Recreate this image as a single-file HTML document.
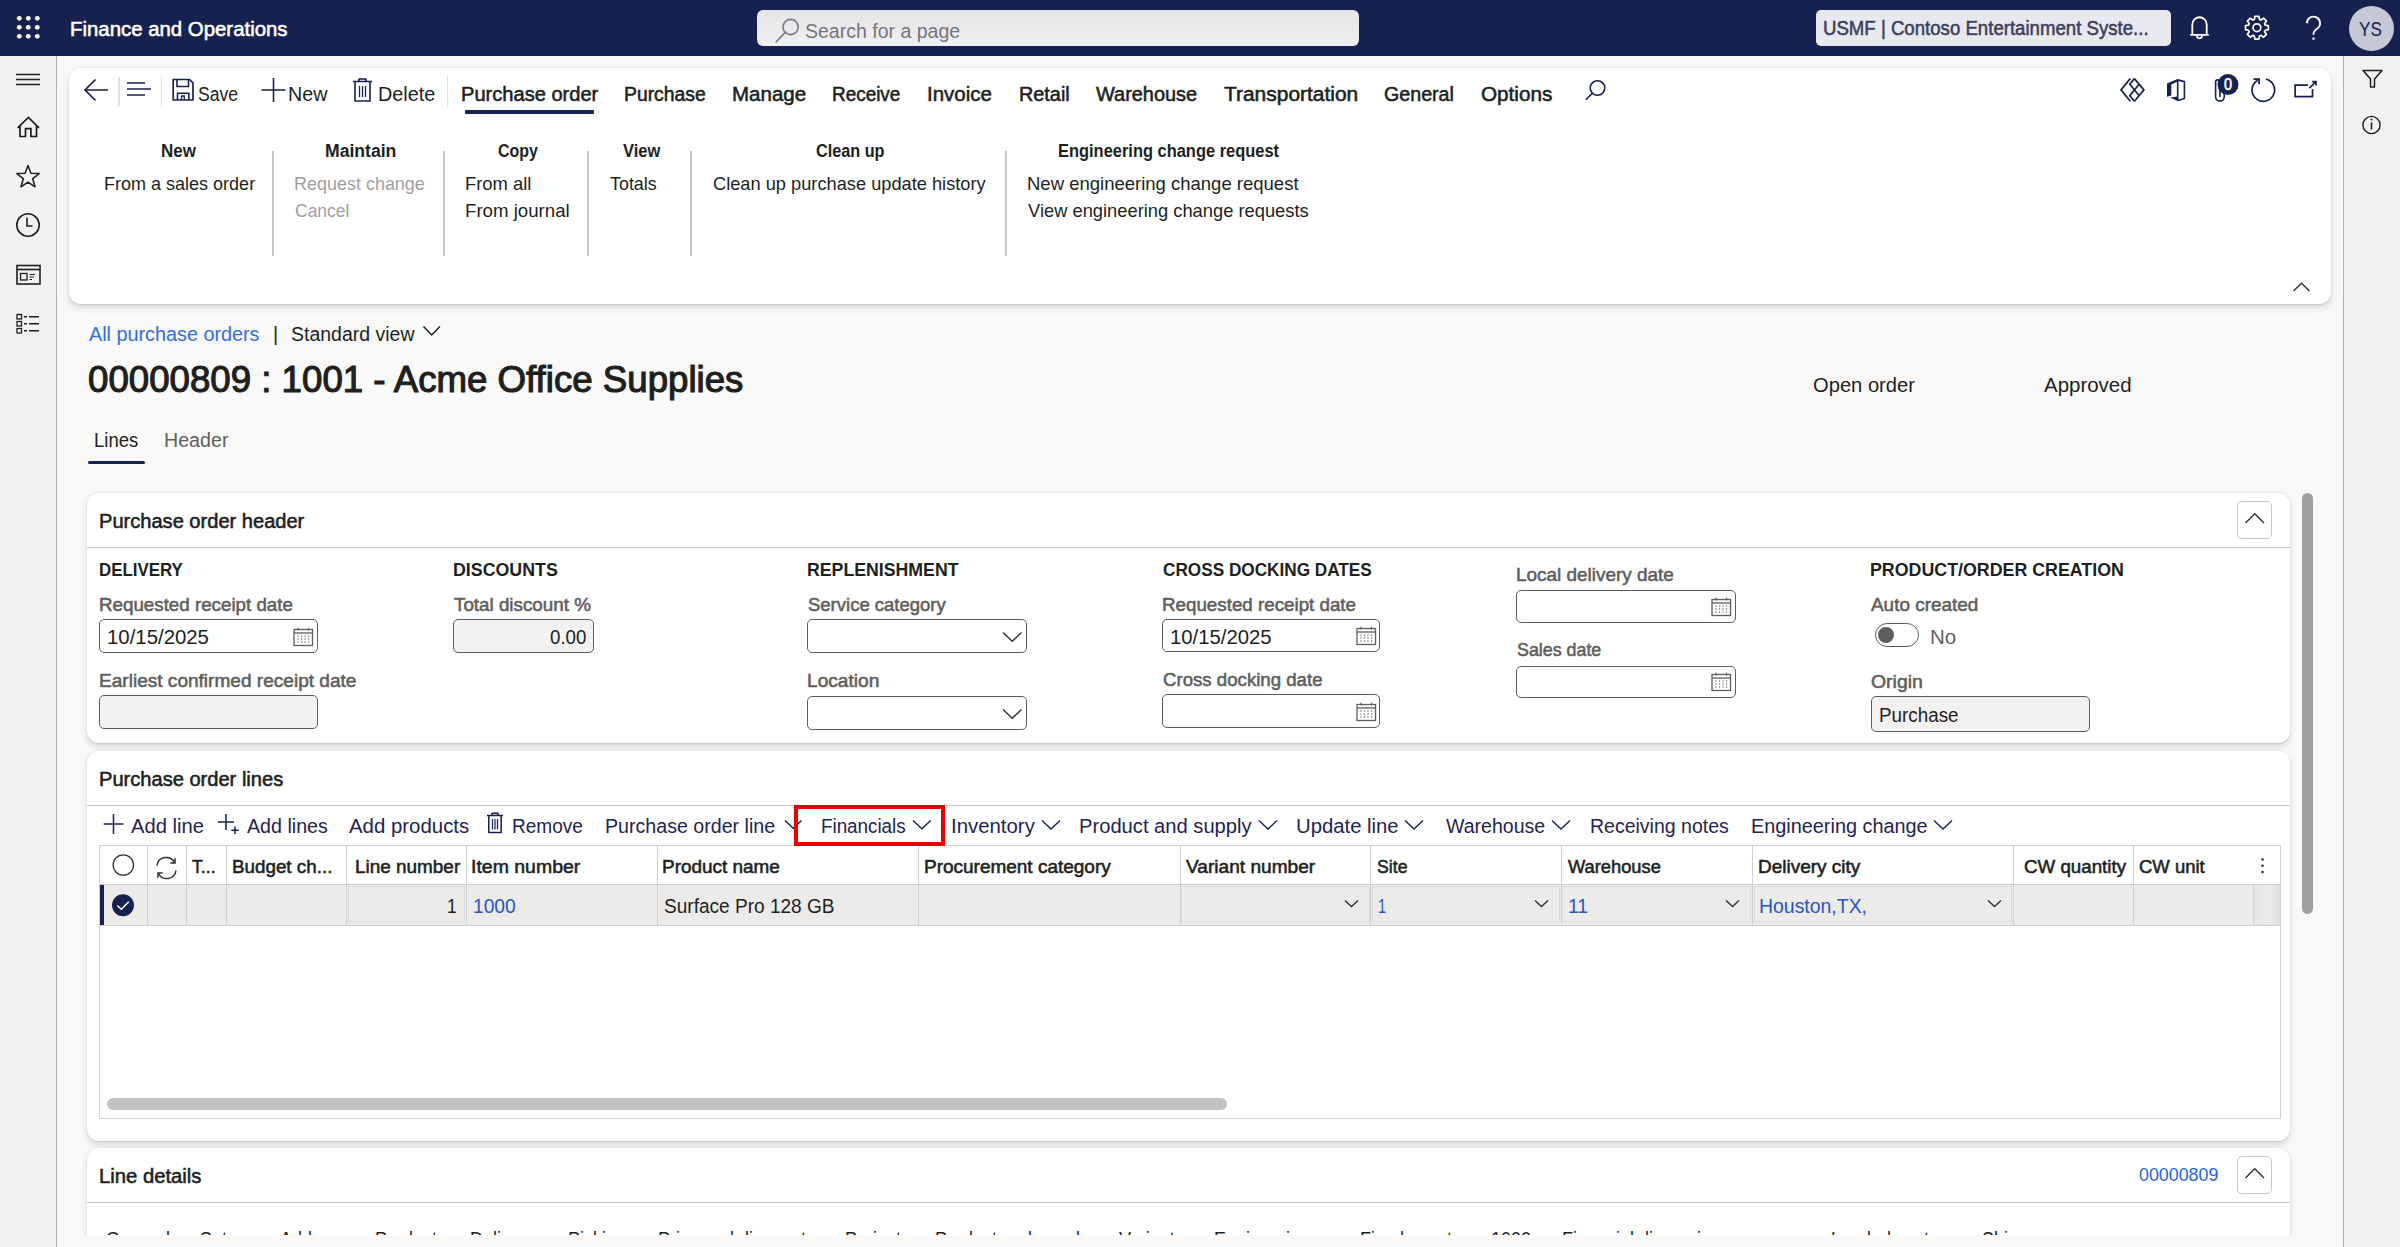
<!DOCTYPE html>
<html><head><meta charset="utf-8"><title>Finance and Operations</title>
<style>
html,body{margin:0;padding:0;width:2400px;height:1247px;overflow:hidden;background:#faf9f8}
body{position:relative;font-family:"Liberation Sans",sans-serif}
span{position:absolute;white-space:pre;line-height:1;transform-origin:0 0}
svg{overflow:visible}
</style></head><body>
<div style="position:absolute;left:0px;top:0px;width:2400px;height:1247px;background:#faf9f8"></div>
<div style="position:absolute;left:0px;top:56px;width:56px;height:1191px;background:#f3f2f1"></div>
<div style="position:absolute;left:56px;top:56px;width:1px;height:1191px;background:#b3b0ad"></div>
<div style="position:absolute;left:2343px;top:56px;width:57px;height:1191px;background:#f3f2f1"></div>
<div style="position:absolute;left:2343px;top:56px;width:1px;height:1191px;background:#b3b0ad"></div>
<div style="position:absolute;left:0px;top:0px;width:2400px;height:56px;background:#172150"></div>
<svg style="position:absolute;left:0px;top:0px" width="56" height="56" viewBox="0 0 56 56" fill="none"><circle cx="19.3" cy="18.3" r="2.4" fill="#fff"/><circle cx="19.3" cy="27.3" r="2.4" fill="#fff"/><circle cx="19.3" cy="36.3" r="2.4" fill="#fff"/><circle cx="28.3" cy="18.3" r="2.4" fill="#fff"/><circle cx="28.3" cy="27.3" r="2.4" fill="#fff"/><circle cx="28.3" cy="36.3" r="2.4" fill="#fff"/><circle cx="37.3" cy="18.3" r="2.4" fill="#fff"/><circle cx="37.3" cy="27.3" r="2.4" fill="#fff"/><circle cx="37.3" cy="36.3" r="2.4" fill="#fff"/></svg>
<div style="position:absolute;left:757px;top:10px;width:602px;height:36px;background:linear-gradient(#e4e4e6,#f0f0f2);border-radius:6px"></div>
<svg style="position:absolute;left:770px;top:14px" width="30" height="32" viewBox="0 0 30 32" fill="none"><circle cx="20.6" cy="13" r="7.6" stroke="#7b7b84" stroke-width="1.6"/><path d="M15.2 18.4 L5.6 28.5" stroke="#7b7b84" stroke-width="1.6"/></svg>
<div style="position:absolute;left:1816px;top:10px;width:355px;height:36px;background:#e8e9ee;border-radius:5px"></div>
<svg style="position:absolute;left:0;top:0" width="2400" height="1247" viewBox="0 0 2400 1247" fill="none"><path d="M2192.3 34.9 V24.4 A7.2 7.2 0 0 1 2206.7 24.4 V34.9 M2190.2 34.9 H2208.8 M2197 35.8 A2.5 2.5 0 0 0 2202 35.8" stroke="#fff" stroke-width="1.8"/><path d="M2254.36 19.38 L2254.89 16.28 L2258.91 16.28 L2259.44 19.38 L2260.98 20.02 L2263.55 18.20 L2266.40 21.05 L2264.58 23.62 L2265.22 25.16 L2268.32 25.69 L2268.32 29.71 L2265.22 30.24 L2264.58 31.78 L2266.40 34.35 L2263.55 37.20 L2260.98 35.38 L2259.44 36.02 L2258.91 39.12 L2254.89 39.12 L2254.36 36.02 L2252.82 35.38 L2250.25 37.20 L2247.40 34.35 L2249.22 31.78 L2248.58 30.24 L2245.48 29.71 L2245.48 25.69 L2248.58 25.16 L2249.22 23.62 L2247.40 21.05 L2250.25 18.20 L2252.82 20.02Z" stroke="#fff" stroke-width="1.7" stroke-linejoin="round"/><circle cx="2256.9" cy="27.7" r="3.9" stroke="#fff" stroke-width="1.7"/><path d="M2306.9 23.2 A6.6 6.6 0 1 1 2317.3 28.6 C2314.6 30.4 2313.4 31.8 2313.4 34.8" stroke="#fff" stroke-width="1.8"/><rect x="2312.4" y="37.6" width="2.1" height="2.1" fill="#fff"/></svg>
<div style="position:absolute;left:2348.75px;top:5.5px;width:45px;height:45px;border-radius:50%;background:#c5c8d6"></div>
<svg style="position:absolute;left:0px;top:56px" width="56" height="300" viewBox="0 0 56 300" fill="none"><path d="M16 18.5 H40 M16 23.5 H40 M16 28.5 H40" stroke="#201f1e" stroke-width="1.3"/><path d="M17.6 71.9 L28.4 61.4 L39 71.9 M20 70 V80.5 H25.5 V72.7 H30.9 V80.5 H36.5 V70" stroke="#201f1e" stroke-width="1.7" stroke-linejoin="miter"/><path d="M28 109.5 L30.9 117.3 L39.2 117.6 L32.7 122.7 L35 130.8 L28 126.2 L21 130.8 L23.3 122.7 L16.8 117.6 L25.1 117.3 Z" stroke="#201f1e" stroke-width="1.5" stroke-linejoin="round"/><circle cx="28" cy="169" r="11.2" stroke="#201f1e" stroke-width="1.6"/><path d="M27 161.5 V170 H32.5" stroke="#201f1e" stroke-width="1.6"/><rect x="17" y="209.5" width="23" height="18.5" stroke="#201f1e" stroke-width="1.6"/><path d="M17 213.5 H40" stroke="#201f1e" stroke-width="1.6"/><rect x="20.5" y="217.5" width="6.5" height="6.5" stroke="#201f1e" stroke-width="1.3"/><path d="M29.5 218.5 H35 M29.5 221 H34 M29.5 223.5 H32" stroke="#201f1e" stroke-width="1.2"/><rect x="17" y="258.5" width="4.5" height="4.5" stroke="#201f1e" stroke-width="1.3"/><rect x="17" y="265.5" width="4.5" height="4.5" stroke="#201f1e" stroke-width="1.3"/><rect x="17" y="272.5" width="4.5" height="4.5" stroke="#201f1e" stroke-width="1.3"/><path d="M24 260.7 H27 M29 260.7 H39 M24 267.7 H27 M29 267.7 H39 M24 274.7 H27 M29 274.7 H39" stroke="#201f1e" stroke-width="1.5"/></svg>
<svg style="position:absolute;left:2356px;top:64px" width="32" height="80" viewBox="0 0 32 80" fill="none"><path d="M7 6.5 H26 L18.5 15 V23 H14.5 V15 Z" stroke="#201f1e" stroke-width="1.5" stroke-linejoin="round"/><circle cx="15.5" cy="61" r="8.6" stroke="#201f1e" stroke-width="1.4"/><path d="M15.5 58.5 V65.5" stroke="#201f1e" stroke-width="1.6"/><circle cx="15.5" cy="55.6" r="1" fill="#201f1e"/></svg>
<div style="position:absolute;left:69px;top:68px;width:2262px;height:236px;background:#fff;border-radius:12px;box-shadow:0 3.2px 7.2px rgba(0,0,0,.13),0 0.6px 1.8px rgba(0,0,0,.11)"></div>
<svg style="position:absolute;left:80px;top:72px" width="34" height="36" viewBox="0 0 34 36" fill="none"><path d="M5 18 H28 M15.5 7.5 L5 18 L15.5 28.5" stroke="#172150" stroke-width="1.7" stroke-linejoin="miter"/></svg>
<div style="position:absolute;left:118px;top:77px;width:2px;height:29px;background:#e1dfdd"></div>
<svg style="position:absolute;left:124px;top:76px" width="30" height="24" viewBox="0 0 30 24" fill="none"><path d="M3 7 H21 M3 13 H27 M3 19 H21" stroke="#172150" stroke-width="1.7"/></svg>
<div style="position:absolute;left:161px;top:76px;width:1px;height:31px;background:#e1dfdd"></div>
<svg style="position:absolute;left:170px;top:76px" width="26" height="28" viewBox="0 0 26 28" fill="none"><path d="M3.2 3.5 H19.5 L23 7 V24 H3.2 Z" stroke="#172150" stroke-width="1.7" stroke-linejoin="round"/><path d="M7 3.5 V10.5 H18.5 V3.5 M7.5 24 V17.2 H18.8 V24" stroke="#172150" stroke-width="1.6"/><path d="M11.5 24 V20 H14.3 V24" stroke="#172150" stroke-width="1.3"/></svg>
<svg style="position:absolute;left:259px;top:76px" width="30" height="28" viewBox="0 0 30 28" fill="none"><path d="M14.5 2 V26 M2.5 14 H26.5" stroke="#172150" stroke-width="1.6"/></svg>
<svg style="position:absolute;left:350px;top:76px" width="26" height="28" viewBox="0 0 26 28" fill="none"><path d="M3 5.5 H22 M9 5.5 V3 H16 V5.5 M5 5.5 V25 H20 V5.5" stroke="#172150" stroke-width="1.6" stroke-linejoin="round"/><path d="M9.5 10 V21 M12.5 10 V21 M15.5 10 V21" stroke="#172150" stroke-width="1.3"/></svg>
<div style="position:absolute;left:447px;top:76px;width:1px;height:31px;background:#e1dfdd"></div>
<div style="position:absolute;left:465px;top:110px;width:129px;height:4px;background:#172150;border-radius:1px"></div>
<svg style="position:absolute;left:1582px;top:78px" width="28" height="26" viewBox="0 0 28 26" fill="none"><circle cx="15.5" cy="10" r="7.3" stroke="#172150" stroke-width="1.6"/><path d="M10.3 15.2 L3.8 21.8" stroke="#172150" stroke-width="1.6"/></svg>
<svg style="position:absolute;left:0;top:0" width="2400" height="1247" viewBox="0 0 2400 1247" fill="none"><path d="M2130.3 78.6 L2121 89.9 L2130.3 101.2 M2134.4 78.6 L2143.9 89.9 L2134.4 101.2 M2134.4 78.6 L2129.8 84.2 L2139.1 95.5 M2139.1 84.3 L2129.8 95.6 L2134.4 101.2" stroke="#172150" stroke-width="1.7" stroke-linejoin="round"/><path d="M2167 83.6 L2177.7 78.9 V81.6 L2171.3 84.4 V95.6 L2167 96.8 Z" fill="#172150"/><path d="M2170 97.6 L2177.7 96.6 V101 Z" fill="#172150"/><path d="M2177.7 79.9 L2184.4 81.6 V98.6 L2177.7 100.4 Z" stroke="#172150" stroke-width="1.6" stroke-linejoin="round"/><path d="M2219.9 96.5 V82 A2.15 2.15 0 0 0 2215.6 82 V96.8 A4.3 4.3 0 0 0 2224.2 96.8 V91" stroke="#172150" stroke-width="1.6" stroke-linecap="round"/><circle cx="2228" cy="84.6" r="10.5" fill="#172150"/><path d="M2257.8 80.2 A11.3 11.3 0 1 0 2266.1 79.1" stroke="#172150" stroke-width="1.7"/><path d="M2253.5 79.1 H2259.1 V84.3" stroke="#172150" stroke-width="1.7"/><path d="M2308 85.1 H2295.1 V96.6 H2312.5 V89" stroke="#172150" stroke-width="1.7"/><path d="M2309.4 88.1 L2315.6 81.9 M2312.2 81.6 H2316 V85.4" stroke="#172150" stroke-width="1.7"/></svg>
<svg style="position:absolute;left:2288px;top:276px" width="30" height="22" viewBox="0 0 30 22" fill="none"><path d="M5.5 15 L13.5 7.3 L21.5 15" stroke="#323130" stroke-width="1.4"/></svg>
<div style="position:absolute;left:272px;top:151px;width:2px;height:105px;background:#c8c6c4"></div>
<div style="position:absolute;left:443px;top:151px;width:2px;height:105px;background:#c8c6c4"></div>
<div style="position:absolute;left:587px;top:151px;width:2px;height:105px;background:#c8c6c4"></div>
<div style="position:absolute;left:690px;top:151px;width:2px;height:105px;background:#c8c6c4"></div>
<div style="position:absolute;left:1005px;top:151px;width:2px;height:105px;background:#c8c6c4"></div>
<svg style="position:absolute;left:420px;top:322px" width="24" height="18" viewBox="0 0 24 18" fill="none"><path d="M3.5 4.5 L11.7 13 L19.9 4.5" stroke="#201f1e" stroke-width="1.5"/></svg>
<div style="position:absolute;left:88px;top:461px;width:57px;height:3px;background:#172150;border-radius:1.5px"></div>
<div style="position:absolute;left:87px;top:493px;width:2203px;height:250px;background:#fff;border-radius:12px;box-shadow:0 3.2px 7.2px rgba(0,0,0,.13),0 0.6px 1.8px rgba(0,0,0,.11)"></div>
<div style="position:absolute;left:2237px;top:501px;width:35px;height:38px;border:1px solid #c8c6c4;border-radius:5px;box-sizing:border-box"></div>
<svg style="position:absolute;left:2243.3px;top:511.4px" width="24" height="16" viewBox="0 0 24 16" fill="none"><path d="M2.5 12 L11.8 2.8 L21 12" stroke="#323130" stroke-width="1.4"/></svg>
<div style="position:absolute;left:87px;top:547px;width:2203px;height:1px;background:#c8c6c4"></div>
<div style="position:absolute;left:99px;top:619px;width:219px;height:34px;background:#fff;border:1px solid #605e5c;border-radius:5px;box-sizing:border-box"></div>
<svg style="position:absolute;left:293.2px;top:626.5px" width="21" height="20" viewBox="0 0 21 20" fill="none"><rect x="1" y="2.5" width="18.5" height="16" stroke="#605e5c" stroke-width="1.3"/><path d="M1 6 H19.5" stroke="#605e5c" stroke-width="1.3"/><path d="M5 0.8 V3.5 M15.5 0.8 V3.5" stroke="#605e5c" stroke-width="1.3"/><rect x="4.4" y="8.4" width="1.2" height="1.2" fill="#605e5c"/><rect x="4.4" y="11.4" width="1.2" height="1.2" fill="#605e5c"/><rect x="4.4" y="14.4" width="1.2" height="1.2" fill="#605e5c"/><rect x="7.9" y="8.4" width="1.2" height="1.2" fill="#605e5c"/><rect x="7.9" y="11.4" width="1.2" height="1.2" fill="#605e5c"/><rect x="7.9" y="14.4" width="1.2" height="1.2" fill="#605e5c"/><rect x="11.4" y="8.4" width="1.2" height="1.2" fill="#605e5c"/><rect x="11.4" y="11.4" width="1.2" height="1.2" fill="#605e5c"/><rect x="11.4" y="14.4" width="1.2" height="1.2" fill="#605e5c"/><rect x="14.9" y="8.4" width="1.2" height="1.2" fill="#605e5c"/><rect x="14.9" y="11.4" width="1.2" height="1.2" fill="#605e5c"/><rect x="14.9" y="14.4" width="1.2" height="1.2" fill="#605e5c"/></svg>
<div style="position:absolute;left:453px;top:619px;width:141px;height:34px;background:#f3f2f1;border:1px solid #605e5c;border-radius:5px;box-sizing:border-box"></div>
<div style="position:absolute;left:807px;top:619px;width:220px;height:34px;background:#fff;border:1px solid #605e5c;border-radius:5px;box-sizing:border-box"></div>
<svg style="position:absolute;left:1001.5px;top:629.2px" width="20.5" height="14" viewBox="0 0 20.5 14" fill="none"><path d="M1 3.5 L10.25 12.25 L19.5 3.5" stroke="#323130" stroke-width="1.4"/></svg>
<div style="position:absolute;left:1162px;top:619px;width:218px;height:33px;background:#fff;border:1px solid #605e5c;border-radius:5px;box-sizing:border-box"></div>
<svg style="position:absolute;left:1356.0px;top:626.3px" width="21" height="20" viewBox="0 0 21 20" fill="none"><rect x="1" y="2.5" width="18.5" height="16" stroke="#605e5c" stroke-width="1.3"/><path d="M1 6 H19.5" stroke="#605e5c" stroke-width="1.3"/><path d="M5 0.8 V3.5 M15.5 0.8 V3.5" stroke="#605e5c" stroke-width="1.3"/><rect x="4.4" y="8.4" width="1.2" height="1.2" fill="#605e5c"/><rect x="4.4" y="11.4" width="1.2" height="1.2" fill="#605e5c"/><rect x="4.4" y="14.4" width="1.2" height="1.2" fill="#605e5c"/><rect x="7.9" y="8.4" width="1.2" height="1.2" fill="#605e5c"/><rect x="7.9" y="11.4" width="1.2" height="1.2" fill="#605e5c"/><rect x="7.9" y="14.4" width="1.2" height="1.2" fill="#605e5c"/><rect x="11.4" y="8.4" width="1.2" height="1.2" fill="#605e5c"/><rect x="11.4" y="11.4" width="1.2" height="1.2" fill="#605e5c"/><rect x="11.4" y="14.4" width="1.2" height="1.2" fill="#605e5c"/><rect x="14.9" y="8.4" width="1.2" height="1.2" fill="#605e5c"/><rect x="14.9" y="11.4" width="1.2" height="1.2" fill="#605e5c"/><rect x="14.9" y="14.4" width="1.2" height="1.2" fill="#605e5c"/></svg>
<div style="position:absolute;left:1516px;top:590px;width:220px;height:33px;background:#fff;border:1px solid #605e5c;border-radius:5px;box-sizing:border-box"></div>
<svg style="position:absolute;left:1711.0px;top:597.3px" width="21" height="20" viewBox="0 0 21 20" fill="none"><rect x="1" y="2.5" width="18.5" height="16" stroke="#605e5c" stroke-width="1.3"/><path d="M1 6 H19.5" stroke="#605e5c" stroke-width="1.3"/><path d="M5 0.8 V3.5 M15.5 0.8 V3.5" stroke="#605e5c" stroke-width="1.3"/><rect x="4.4" y="8.4" width="1.2" height="1.2" fill="#605e5c"/><rect x="4.4" y="11.4" width="1.2" height="1.2" fill="#605e5c"/><rect x="4.4" y="14.4" width="1.2" height="1.2" fill="#605e5c"/><rect x="7.9" y="8.4" width="1.2" height="1.2" fill="#605e5c"/><rect x="7.9" y="11.4" width="1.2" height="1.2" fill="#605e5c"/><rect x="7.9" y="14.4" width="1.2" height="1.2" fill="#605e5c"/><rect x="11.4" y="8.4" width="1.2" height="1.2" fill="#605e5c"/><rect x="11.4" y="11.4" width="1.2" height="1.2" fill="#605e5c"/><rect x="11.4" y="14.4" width="1.2" height="1.2" fill="#605e5c"/><rect x="14.9" y="8.4" width="1.2" height="1.2" fill="#605e5c"/><rect x="14.9" y="11.4" width="1.2" height="1.2" fill="#605e5c"/><rect x="14.9" y="14.4" width="1.2" height="1.2" fill="#605e5c"/></svg>
<div style="position:absolute;left:1516px;top:666px;width:220px;height:32px;background:#fff;border:1px solid #605e5c;border-radius:5px;box-sizing:border-box"></div>
<svg style="position:absolute;left:1711.0px;top:672.3px" width="21" height="20" viewBox="0 0 21 20" fill="none"><rect x="1" y="2.5" width="18.5" height="16" stroke="#605e5c" stroke-width="1.3"/><path d="M1 6 H19.5" stroke="#605e5c" stroke-width="1.3"/><path d="M5 0.8 V3.5 M15.5 0.8 V3.5" stroke="#605e5c" stroke-width="1.3"/><rect x="4.4" y="8.4" width="1.2" height="1.2" fill="#605e5c"/><rect x="4.4" y="11.4" width="1.2" height="1.2" fill="#605e5c"/><rect x="4.4" y="14.4" width="1.2" height="1.2" fill="#605e5c"/><rect x="7.9" y="8.4" width="1.2" height="1.2" fill="#605e5c"/><rect x="7.9" y="11.4" width="1.2" height="1.2" fill="#605e5c"/><rect x="7.9" y="14.4" width="1.2" height="1.2" fill="#605e5c"/><rect x="11.4" y="8.4" width="1.2" height="1.2" fill="#605e5c"/><rect x="11.4" y="11.4" width="1.2" height="1.2" fill="#605e5c"/><rect x="11.4" y="14.4" width="1.2" height="1.2" fill="#605e5c"/><rect x="14.9" y="8.4" width="1.2" height="1.2" fill="#605e5c"/><rect x="14.9" y="11.4" width="1.2" height="1.2" fill="#605e5c"/><rect x="14.9" y="14.4" width="1.2" height="1.2" fill="#605e5c"/></svg>
<div style="position:absolute;left:99px;top:695px;width:219px;height:34px;background:#f3f2f1;border:1px solid #605e5c;border-radius:5px;box-sizing:border-box"></div>
<div style="position:absolute;left:807px;top:696px;width:220px;height:34px;background:#fff;border:1px solid #605e5c;border-radius:5px;box-sizing:border-box"></div>
<svg style="position:absolute;left:1001.5px;top:706px" width="20.5" height="14" viewBox="0 0 20.5 14" fill="none"><path d="M1 3.5 L10.25 12.25 L19.5 3.5" stroke="#323130" stroke-width="1.4"/></svg>
<div style="position:absolute;left:1162px;top:694px;width:218px;height:34px;background:#fff;border:1px solid #605e5c;border-radius:5px;box-sizing:border-box"></div>
<svg style="position:absolute;left:1356.0px;top:701.8px" width="21" height="20" viewBox="0 0 21 20" fill="none"><rect x="1" y="2.5" width="18.5" height="16" stroke="#605e5c" stroke-width="1.3"/><path d="M1 6 H19.5" stroke="#605e5c" stroke-width="1.3"/><path d="M5 0.8 V3.5 M15.5 0.8 V3.5" stroke="#605e5c" stroke-width="1.3"/><rect x="4.4" y="8.4" width="1.2" height="1.2" fill="#605e5c"/><rect x="4.4" y="11.4" width="1.2" height="1.2" fill="#605e5c"/><rect x="4.4" y="14.4" width="1.2" height="1.2" fill="#605e5c"/><rect x="7.9" y="8.4" width="1.2" height="1.2" fill="#605e5c"/><rect x="7.9" y="11.4" width="1.2" height="1.2" fill="#605e5c"/><rect x="7.9" y="14.4" width="1.2" height="1.2" fill="#605e5c"/><rect x="11.4" y="8.4" width="1.2" height="1.2" fill="#605e5c"/><rect x="11.4" y="11.4" width="1.2" height="1.2" fill="#605e5c"/><rect x="11.4" y="14.4" width="1.2" height="1.2" fill="#605e5c"/><rect x="14.9" y="8.4" width="1.2" height="1.2" fill="#605e5c"/><rect x="14.9" y="11.4" width="1.2" height="1.2" fill="#605e5c"/><rect x="14.9" y="14.4" width="1.2" height="1.2" fill="#605e5c"/></svg>
<div style="position:absolute;left:1871px;top:696px;width:219px;height:36px;background:#f3f2f1;border:1px solid #605e5c;border-radius:5px;box-sizing:border-box"></div>
<div style="position:absolute;left:1875px;top:623px;width:44px;height:24px;border:1px solid #605e5c;border-radius:12px;box-sizing:border-box;background:#fff"></div>
<div style="position:absolute;left:1878px;top:626.8px;width:16px;height:16px;border-radius:50%;background:#605e5c"></div>
<div style="position:absolute;left:2302px;top:493px;width:11px;height:421px;background:#a19f9d;border-radius:6px"></div>
<div style="position:absolute;left:87px;top:751px;width:2203px;height:390px;background:#fff;border-radius:12px;box-shadow:0 3.2px 7.2px rgba(0,0,0,.13),0 0.6px 1.8px rgba(0,0,0,.11)"></div>
<div style="position:absolute;left:87px;top:805px;width:2203px;height:1px;background:#c8c6c4"></div>
<svg style="position:absolute;left:100px;top:810px" width="28" height="28" viewBox="0 0 28 28" fill="none"><path d="M13.5 4 V24 M3.7 14 H23.3" stroke="#172150" stroke-width="1.5"/></svg>
<svg style="position:absolute;left:216px;top:810px" width="28" height="28" viewBox="0 0 28 28" fill="none"><path d="M10 4 V20 M2 12 H18 M19 16.5 V24 M15.3 20.2 H22.8" stroke="#172150" stroke-width="1.5"/></svg>
<svg style="position:absolute;left:484px;top:810px" width="22" height="26" viewBox="0 0 22 26" fill="none"><path d="M3 5.5 H19 M8 5.5 V3.3 H14 V5.5 M4.8 5.5 V22.5 H17.2 V5.5" stroke="#172150" stroke-width="1.5" stroke-linejoin="round"/><path d="M8.5 9 V19.5 M11 9 V19.5 M13.5 9 V19.5" stroke="#172150" stroke-width="1.2"/></svg>
<svg style="position:absolute;left:783.6px;top:816.8px" width="18.5" height="14" viewBox="0 0 18.5 14" fill="none"><path d="M1 3.5 L9.25 11.25 L17.5 3.5" stroke="#172150" stroke-width="1.4"/></svg>
<svg style="position:absolute;left:911.7px;top:816.8px" width="19.7" height="14" viewBox="0 0 19.7 14" fill="none"><path d="M1 3.5 L9.85 11.85 L18.7 3.5" stroke="#172150" stroke-width="1.4"/></svg>
<svg style="position:absolute;left:1040.8px;top:816.8px" width="20" height="14" viewBox="0 0 20 14" fill="none"><path d="M1 3.5 L10.0 12.0 L19 3.5" stroke="#172150" stroke-width="1.4"/></svg>
<svg style="position:absolute;left:1257.5px;top:816.8px" width="20" height="14" viewBox="0 0 20 14" fill="none"><path d="M1 3.5 L10.0 12.0 L19 3.5" stroke="#172150" stroke-width="1.4"/></svg>
<svg style="position:absolute;left:1403.5px;top:816.8px" width="20" height="14" viewBox="0 0 20 14" fill="none"><path d="M1 3.5 L10.0 12.0 L19 3.5" stroke="#172150" stroke-width="1.4"/></svg>
<svg style="position:absolute;left:1550.6px;top:816.8px" width="20" height="14" viewBox="0 0 20 14" fill="none"><path d="M1 3.5 L10.0 12.0 L19 3.5" stroke="#172150" stroke-width="1.4"/></svg>
<svg style="position:absolute;left:1933px;top:816.8px" width="20" height="14" viewBox="0 0 20 14" fill="none"><path d="M1 3.5 L10.0 12.0 L19 3.5" stroke="#172150" stroke-width="1.4"/></svg>
<div style="position:absolute;left:99px;top:845px;width:2182px;height:274px;border:1px solid #d2d0ce;box-sizing:border-box"></div>
<div style="position:absolute;left:100px;top:884px;width:2180px;height:1px;background:#d2d0ce"></div>
<div style="position:absolute;left:100px;top:885px;width:2180px;height:40px;background:#edebe9"></div>
<div style="position:absolute;left:100px;top:925px;width:2180px;height:1px;background:#d2d0ce"></div>
<div style="position:absolute;left:100px;top:885px;width:4px;height:40px;background:#172150"></div>
<div style="position:absolute;left:147px;top:846px;width:1px;height:79px;background:#d2d0ce"></div>
<div style="position:absolute;left:186px;top:846px;width:1px;height:79px;background:#d2d0ce"></div>
<div style="position:absolute;left:226px;top:846px;width:1px;height:79px;background:#d2d0ce"></div>
<div style="position:absolute;left:346px;top:846px;width:1px;height:79px;background:#d2d0ce"></div>
<div style="position:absolute;left:466px;top:846px;width:1px;height:79px;background:#d2d0ce"></div>
<div style="position:absolute;left:657px;top:846px;width:1px;height:79px;background:#d2d0ce"></div>
<div style="position:absolute;left:918px;top:846px;width:1px;height:79px;background:#d2d0ce"></div>
<div style="position:absolute;left:1180px;top:846px;width:1px;height:79px;background:#d2d0ce"></div>
<div style="position:absolute;left:1370px;top:846px;width:1px;height:79px;background:#d2d0ce"></div>
<div style="position:absolute;left:1561px;top:846px;width:1px;height:79px;background:#d2d0ce"></div>
<div style="position:absolute;left:1752px;top:846px;width:1px;height:79px;background:#d2d0ce"></div>
<div style="position:absolute;left:2013px;top:846px;width:1px;height:79px;background:#d2d0ce"></div>
<div style="position:absolute;left:2133px;top:846px;width:1px;height:79px;background:#d2d0ce"></div>
<div style="position:absolute;left:2253px;top:885px;width:1px;height:40px;background:#d2d0ce"></div>
<div style="position:absolute;left:2254px;top:885px;width:26px;height:40px;background:linear-gradient(90deg,#e6e4e2,#edebe9 60%,#e0dedc)"></div>
<div style="position:absolute;left:348px;top:886px;width:117px;height:36px;border:1.5px solid #dcdde3;box-sizing:border-box"></div>
<div style="position:absolute;left:1181px;top:886px;width:189px;height:36px;border:1.5px solid #dcdde3;box-sizing:border-box"></div>
<div style="position:absolute;left:1372px;top:886px;width:188px;height:36px;border:1.5px solid #dcdde3;box-sizing:border-box"></div>
<div style="position:absolute;left:1562px;top:886px;width:189px;height:36px;border:1.5px solid #dcdde3;box-sizing:border-box"></div>
<div style="position:absolute;left:1754px;top:886px;width:258px;height:36px;border:1.5px solid #dcdde3;box-sizing:border-box"></div>
<svg style="position:absolute;left:110px;top:852px" width="28" height="28" viewBox="0 0 28 28" fill="none"><circle cx="13.3" cy="13" r="10.2" stroke="#323130" stroke-width="1.2"/></svg>
<svg style="position:absolute;left:110px;top:892px" width="28" height="28" viewBox="0 0 28 28" fill="none"><circle cx="13" cy="13.3" r="11" fill="#172150"/><path d="M7.3 13.5 L11.3 17.3 L18.8 9.8" stroke="#fff" stroke-width="1.5"/></svg>
<svg style="position:absolute;left:152px;top:852px" width="30" height="30" viewBox="0 0 30 30" fill="none"><path d="M5 13.5 A9.3 9.3 0 0 1 22.5 10.5 M24 18.5 A9.3 9.3 0 0 1 6.5 21.5" stroke="#323130" stroke-width="1.5"/><path d="M23 6.2 V11 H18.3 M6 25.7 V21 H10.7" stroke="#323130" stroke-width="1.5"/></svg>
<svg style="position:absolute;left:2256px;top:856px" width="14" height="20" viewBox="0 0 14 20" fill="none"><circle cx="6.5" cy="3.5" r="1.3" fill="#323130"/><circle cx="6.5" cy="9.8" r="1.3" fill="#323130"/><circle cx="6.5" cy="16" r="1.3" fill="#323130"/></svg>
<svg style="position:absolute;left:1344px;top:897px" width="15" height="14" viewBox="0 0 15 14" fill="none"><path d="M1 3.5 L7.5 9.5 L14 3.5" stroke="#323130" stroke-width="1.4"/></svg>
<svg style="position:absolute;left:1534px;top:897px" width="15" height="14" viewBox="0 0 15 14" fill="none"><path d="M1 3.5 L7.5 9.5 L14 3.5" stroke="#323130" stroke-width="1.4"/></svg>
<svg style="position:absolute;left:1724.5px;top:897px" width="15" height="14" viewBox="0 0 15 14" fill="none"><path d="M1 3.5 L7.5 9.5 L14 3.5" stroke="#323130" stroke-width="1.4"/></svg>
<svg style="position:absolute;left:1986.5px;top:897px" width="15" height="14" viewBox="0 0 15 14" fill="none"><path d="M1 3.5 L7.5 9.5 L14 3.5" stroke="#323130" stroke-width="1.4"/></svg>
<div style="position:absolute;left:107px;top:1098px;width:1120px;height:12px;background:#c2c2c2;border-radius:6px"></div>
<div style="position:absolute;left:794px;top:805px;width:151px;height:41px;border:4px solid #ea0000;box-sizing:border-box"></div>
<div style="position:absolute;left:0;top:1140px;width:2343px;height:95px;overflow:hidden">
<div style="position:absolute;left:87px;top:8px;width:2203px;height:192px;background:#fff;border-radius:12px;box-shadow:0 3.2px 7.2px rgba(0,0,0,.13),0 0.6px 1.8px rgba(0,0,0,.11)"></div>
</div>
<div style="position:absolute;left:2237px;top:1156px;width:35px;height:38px;border:1px solid #c8c6c4;border-radius:5px;box-sizing:border-box"></div>
<svg style="position:absolute;left:2243.3px;top:1166.3px" width="24" height="16" viewBox="0 0 24 16" fill="none"><path d="M2.5 12 L11.8 2.8 L21 12" stroke="#323130" stroke-width="1.4"/></svg>
<div style="position:absolute;left:87px;top:1202px;width:2203px;height:1px;background:#c8c6c4"></div>
<span style="left:69.73px;top:18.22px;font-size:21px;color:#ffffff;-webkit-text-stroke:0.57px #ffffff;transform:scaleX(0.9705);">Finance and Operations</span>
<span style="left:805.00px;top:20.57px;font-size:20px;color:#75757d;transform:scaleX(0.9756);">Search for a page</span>
<span style="left:1822.82px;top:18.07px;font-size:20px;color:#3b3f5e;-webkit-text-stroke:0.55px #3b3f5e;transform:scaleX(0.9309);">USMF | Contoso Entertainment Syste...</span>
<span style="left:2358.75px;top:18.82px;font-size:20px;color:#172150;transform:scaleX(0.8542);">YS</span>
<span style="left:198.00px;top:84.07px;font-size:20px;color:#201f1e;transform:scaleX(0.8798);">Save</span>
<span style="left:288.01px;top:84.07px;font-size:20px;color:#201f1e;transform:scaleX(0.9857);">New</span>
<span style="left:377.51px;top:84.07px;font-size:20px;color:#201f1e;transform:scaleX(0.9914);">Delete</span>
<span style="left:460.50px;top:83.77px;font-size:20px;color:#201f1e;-webkit-text-stroke:0.55px #201f1e;transform:scaleX(1.0042);">Purchase order</span>
<span style="left:623.83px;top:83.77px;font-size:20px;color:#201f1e;-webkit-text-stroke:0.55px #201f1e;transform:scaleX(0.9676);">Purchase</span>
<span style="left:731.77px;top:83.77px;font-size:20px;color:#201f1e;-webkit-text-stroke:0.55px #201f1e;transform:scaleX(1.0251);">Manage</span>
<span style="left:832.05px;top:83.77px;font-size:20px;color:#201f1e;-webkit-text-stroke:0.55px #201f1e;transform:scaleX(0.9458);">Receive</span>
<span style="left:926.58px;top:83.77px;font-size:20px;color:#201f1e;-webkit-text-stroke:0.55px #201f1e;transform:scaleX(1.0224);">Invoice</span>
<span style="left:1018.91px;top:83.77px;font-size:20px;color:#201f1e;-webkit-text-stroke:0.55px #201f1e;transform:scaleX(0.9913);">Retail</span>
<span style="left:1096.10px;top:83.77px;font-size:20px;color:#201f1e;-webkit-text-stroke:0.55px #201f1e;transform:scaleX(0.9955);">Warehouse</span>
<span style="left:1224.20px;top:83.77px;font-size:20px;color:#201f1e;-webkit-text-stroke:0.55px #201f1e;transform:scaleX(1.0467);">Transportation</span>
<span style="left:1384.02px;top:83.77px;font-size:20px;color:#201f1e;-webkit-text-stroke:0.55px #201f1e;transform:scaleX(0.9821);">General</span>
<span style="left:1481.00px;top:83.77px;font-size:20px;color:#201f1e;-webkit-text-stroke:0.55px #201f1e;transform:scaleX(1.0335);">Options</span>
<span style="left:2224.20px;top:76.25px;font-size:17.3px;color:#ffffff;-webkit-text-stroke:0.55px #ffffff;transform:scaleX(0.8377);">0</span>
<span style="left:161.46px;top:142.36px;font-size:18px;color:#201f1e;transform:scaleX(0.9430);font-weight:bold;">New</span>
<span style="left:324.62px;top:142.36px;font-size:18px;color:#201f1e;transform:scaleX(0.9774);font-weight:bold;">Maintain</span>
<span style="left:497.50px;top:142.36px;font-size:18px;color:#201f1e;transform:scaleX(0.8869);font-weight:bold;">Copy</span>
<span style="left:622.50px;top:142.36px;font-size:18px;color:#201f1e;transform:scaleX(0.9162);font-weight:bold;">View</span>
<span style="left:816.20px;top:142.36px;font-size:18px;color:#201f1e;transform:scaleX(0.9012);font-weight:bold;">Clean up</span>
<span style="left:1057.69px;top:142.36px;font-size:18px;color:#201f1e;transform:scaleX(0.9131);font-weight:bold;">Engineering change request</span>
<span style="left:103.73px;top:175.04px;font-size:18.5px;color:#201f1e;transform:scaleX(0.9735);">From a sales order</span>
<span style="left:294.43px;top:175.04px;font-size:18.5px;color:#a19f9d;transform:scaleX(0.9711);">Request change</span>
<span style="left:465.21px;top:175.04px;font-size:18.5px;color:#201f1e;transform:scaleX(0.9938);">From all</span>
<span style="left:609.80px;top:175.04px;font-size:18.5px;color:#201f1e;transform:scaleX(0.9672);">Totals</span>
<span style="left:713.40px;top:175.04px;font-size:18.5px;color:#201f1e;transform:scaleX(0.9856);">Clean up purchase update history</span>
<span style="left:1027.00px;top:175.04px;font-size:18.5px;color:#201f1e;">New engineering change request</span>
<span style="left:295.40px;top:202.14px;font-size:18.5px;color:#a19f9d;transform:scaleX(0.9455);">Cancel</span>
<span style="left:464.99px;top:202.14px;font-size:18.5px;color:#201f1e;transform:scaleX(1.0086);">From journal</span>
<span style="left:1028.00px;top:202.14px;font-size:18.5px;color:#201f1e;transform:scaleX(0.9899);">View engineering change requests</span>
<span style="left:88.50px;top:323.57px;font-size:20px;color:#2f6fde;transform:scaleX(0.9895);">All purchase orders</span>
<span style="left:273.00px;top:323.57px;font-size:20px;color:#201f1e;">|</span>
<span style="left:291.00px;top:323.57px;font-size:20px;color:#201f1e;transform:scaleX(0.9741);">Standard view</span>
<span style="left:87.51px;top:360.67px;font-size:37px;color:#201f1e;-webkit-text-stroke:0.90px #201f1e;transform:scaleX(0.9906);-webkit-text-stroke:1.15px #201f1e;">00000809 : 1001 - Acme Office Supplies</span>
<span style="left:1812.50px;top:375.07px;font-size:20px;color:#201f1e;transform:scaleX(1.0078);">Open order</span>
<span style="left:2043.80px;top:375.07px;font-size:20px;color:#201f1e;transform:scaleX(1.0226);">Approved</span>
<span style="left:93.78px;top:429.87px;font-size:20px;color:#201f1e;transform:scaleX(0.9250);">Lines</span>
<span style="left:164.02px;top:429.87px;font-size:20px;color:#605e5c;transform:scaleX(0.9825);">Header</span>
<span style="left:98.80px;top:511.37px;font-size:20px;color:#201f1e;-webkit-text-stroke:0.55px #201f1e;transform:scaleX(1.0036);">Purchase order header</span>
<span style="left:98.86px;top:560.66px;font-size:18px;color:#201f1e;transform:scaleX(0.9384);font-weight:bold;">DELIVERY</span>
<span style="left:452.76px;top:560.66px;font-size:18px;color:#201f1e;transform:scaleX(0.9881);font-weight:bold;">DISCOUNTS</span>
<span style="left:807.27px;top:560.66px;font-size:18px;color:#201f1e;transform:scaleX(0.9836);font-weight:bold;">REPLENISHMENT</span>
<span style="left:1162.50px;top:560.66px;font-size:18px;color:#201f1e;transform:scaleX(0.9546);font-weight:bold;">CROSS DOCKING DATES</span>
<span style="left:1870.41px;top:560.66px;font-size:18px;color:#201f1e;transform:scaleX(0.9891);font-weight:bold;">PRODUCT/ORDER CREATION</span>
<span style="left:98.81px;top:594.91px;font-size:19px;color:#605e5c;-webkit-text-stroke:0.55px #605e5c;transform:scaleX(0.9870);">Requested receipt date</span>
<span style="left:453.75px;top:594.91px;font-size:19px;color:#605e5c;-webkit-text-stroke:0.55px #605e5c;transform:scaleX(0.9891);">Total discount %</span>
<span style="left:808.25px;top:594.91px;font-size:19px;color:#605e5c;-webkit-text-stroke:0.55px #605e5c;transform:scaleX(0.9733);">Service category</span>
<span style="left:1161.51px;top:594.91px;font-size:19px;color:#605e5c;-webkit-text-stroke:0.55px #605e5c;transform:scaleX(0.9875);">Requested receipt date</span>
<span style="left:1871.40px;top:594.91px;font-size:19px;color:#605e5c;-webkit-text-stroke:0.55px #605e5c;transform:scaleX(0.9961);">Auto created</span>
<span style="left:1516.00px;top:565.16px;font-size:19px;color:#605e5c;-webkit-text-stroke:0.55px #605e5c;transform:scaleX(0.9958);">Local delivery date</span>
<span style="left:1517.00px;top:640.16px;font-size:19px;color:#605e5c;-webkit-text-stroke:0.55px #605e5c;transform:scaleX(0.9385);">Sales date</span>
<span style="left:98.60px;top:670.51px;font-size:19px;color:#605e5c;-webkit-text-stroke:0.55px #605e5c;transform:scaleX(1.0031);">Earliest confirmed receipt date</span>
<span style="left:806.99px;top:670.91px;font-size:19px;color:#605e5c;-webkit-text-stroke:0.55px #605e5c;transform:scaleX(1.0061);">Location</span>
<span style="left:1162.50px;top:670.16px;font-size:19px;color:#605e5c;-webkit-text-stroke:0.55px #605e5c;transform:scaleX(0.9808);">Cross docking date</span>
<span style="left:1871.40px;top:672.01px;font-size:19px;color:#605e5c;-webkit-text-stroke:0.55px #605e5c;transform:scaleX(1.0224);">Origin</span>
<span style="left:106.68px;top:627.07px;font-size:20px;color:#201f1e;transform:scaleX(1.0184);">10/15/2025</span>
<span style="left:550.00px;top:626.87px;font-size:20px;color:#201f1e;transform:scaleX(0.9342);">0.00</span>
<span style="left:1170.23px;top:626.87px;font-size:20px;color:#201f1e;transform:scaleX(1.0154);">10/15/2025</span>
<span style="left:1878.51px;top:705.27px;font-size:20px;color:#201f1e;transform:scaleX(0.9410);">Purchase</span>
<span style="left:1930.18px;top:627.07px;font-size:20px;color:#605e5c;transform:scaleX(1.0248);">No</span>
<span style="left:98.75px;top:769.07px;font-size:20px;color:#201f1e;-webkit-text-stroke:0.55px #201f1e;transform:scaleX(1.0042);">Purchase order lines</span>
<span style="left:130.50px;top:815.77px;font-size:20px;color:#1f2451;transform:scaleX(1.0090);">Add line</span>
<span style="left:246.70px;top:815.77px;font-size:20px;color:#1f2451;transform:scaleX(0.9821);">Add lines</span>
<span style="left:348.80px;top:815.77px;font-size:20px;color:#1f2451;transform:scaleX(1.0199);">Add products</span>
<span style="left:511.75px;top:815.77px;font-size:20px;color:#1f2451;transform:scaleX(0.9516);">Remove</span>
<span style="left:605.02px;top:815.77px;font-size:20px;color:#1f2451;transform:scaleX(0.9808);">Purchase order line</span>
<span style="left:820.76px;top:815.77px;font-size:20px;color:#1f2451;transform:scaleX(0.9400);">Financials</span>
<span style="left:950.88px;top:815.77px;font-size:20px;color:#1f2451;transform:scaleX(1.0189);">Inventory</span>
<span style="left:1079.39px;top:815.77px;font-size:20px;color:#1f2451;transform:scaleX(1.0081);">Product and supply</span>
<span style="left:1296.49px;top:815.77px;font-size:20px;color:#1f2451;transform:scaleX(1.0144);">Update line</span>
<span style="left:1446.00px;top:815.77px;font-size:20px;color:#1f2451;transform:scaleX(0.9762);">Warehouse</span>
<span style="left:1590.02px;top:815.77px;font-size:20px;color:#1f2451;transform:scaleX(0.9752);">Receiving notes</span>
<span style="left:1751.01px;top:815.77px;font-size:20px;color:#1f2451;transform:scaleX(0.9927);">Engineering change</span>
<span style="left:192.00px;top:857.77px;font-size:18.7px;color:#201f1e;-webkit-text-stroke:0.55px #201f1e;transform:scaleX(0.9474);">T...</span>
<span style="left:231.99px;top:857.77px;font-size:18.7px;color:#201f1e;-webkit-text-stroke:0.55px #201f1e;transform:scaleX(1.0062);">Budget ch...</span>
<span style="left:355.29px;top:857.77px;font-size:18.7px;color:#201f1e;-webkit-text-stroke:0.55px #201f1e;transform:scaleX(1.0125);">Line number</span>
<span style="left:471.26px;top:857.77px;font-size:18.7px;color:#201f1e;-webkit-text-stroke:0.55px #201f1e;transform:scaleX(1.0420);">Item number</span>
<span style="left:661.99px;top:857.77px;font-size:18.7px;color:#201f1e;-webkit-text-stroke:0.55px #201f1e;transform:scaleX(1.0130);">Product name</span>
<span style="left:923.68px;top:857.77px;font-size:18.7px;color:#201f1e;-webkit-text-stroke:0.55px #201f1e;transform:scaleX(1.0155);">Procurement category</span>
<span style="left:1186.00px;top:857.77px;font-size:18.7px;color:#201f1e;-webkit-text-stroke:0.55px #201f1e;transform:scaleX(1.0221);">Variant number</span>
<span style="left:1376.80px;top:857.77px;font-size:18.7px;color:#201f1e;-webkit-text-stroke:0.55px #201f1e;transform:scaleX(0.9488);">Site</span>
<span style="left:1567.50px;top:857.77px;font-size:18.7px;color:#201f1e;-webkit-text-stroke:0.55px #201f1e;transform:scaleX(0.9787);">Warehouse</span>
<span style="left:1757.73px;top:857.77px;font-size:18.7px;color:#201f1e;-webkit-text-stroke:0.55px #201f1e;transform:scaleX(1.0156);">Delivery city</span>
<span style="left:2024.25px;top:857.77px;font-size:18.7px;color:#201f1e;-webkit-text-stroke:0.55px #201f1e;transform:scaleX(1.0026);">CW quantity</span>
<span style="left:2139.25px;top:857.77px;font-size:18.7px;color:#201f1e;-webkit-text-stroke:0.55px #201f1e;transform:scaleX(0.9880);">CW unit</span>
<span style="left:447.13px;top:895.57px;font-size:20px;color:#201f1e;transform:scaleX(0.8700);">1</span>
<span style="left:472.94px;top:895.57px;font-size:20px;color:#2656c8;transform:scaleX(0.9592);">1000</span>
<span style="left:663.50px;top:895.57px;font-size:20px;color:#201f1e;transform:scaleX(0.9527);">Surface Pro 128 GB</span>
<span style="left:1378.03px;top:895.57px;font-size:20px;color:#2656c8;transform:scaleX(0.7250);">1</span>
<span style="left:1568.03px;top:895.57px;font-size:20px;color:#2656c8;transform:scaleX(0.9675);">11</span>
<span style="left:1758.53px;top:895.57px;font-size:20px;color:#2656c8;transform:scaleX(0.9714);">Houston,TX,</span>
<span style="left:98.69px;top:1165.57px;font-size:20px;color:#201f1e;-webkit-text-stroke:0.55px #201f1e;transform:scaleX(1.0126);">Line details</span>
<span style="left:2138.80px;top:1166.14px;font-size:18.5px;color:#2266e3;transform:scaleX(0.9644);">00000809</span>
<span style="left:105.80px;top:1228.67px;font-size:20px;color:#201f1e;transform:scaleX(0.9000);">General</span>
<span style="left:200.00px;top:1228.67px;font-size:20px;color:#201f1e;transform:scaleX(0.9000);">Setup</span>
<span style="left:279.60px;top:1228.67px;font-size:20px;color:#201f1e;transform:scaleX(0.9000);">Address</span>
<span style="left:374.50px;top:1228.67px;font-size:20px;color:#201f1e;transform:scaleX(0.9000);">Product</span>
<span style="left:470.10px;top:1228.67px;font-size:20px;color:#201f1e;transform:scaleX(0.9000);">Delivery</span>
<span style="left:568.10px;top:1228.67px;font-size:20px;color:#201f1e;transform:scaleX(0.9000);">Picking</span>
<span style="left:657.85px;top:1228.67px;font-size:20px;color:#201f1e;transform:scaleX(0.9000);">Price and discount</span>
<span style="left:845.10px;top:1228.67px;font-size:20px;color:#201f1e;transform:scaleX(0.9000);">Project</span>
<span style="left:934.90px;top:1228.67px;font-size:20px;color:#201f1e;transform:scaleX(0.9000);">Product and supply</span>
<span style="left:1119.00px;top:1228.67px;font-size:20px;color:#201f1e;transform:scaleX(0.9000);">Variant</span>
<span style="left:1214.10px;top:1228.67px;font-size:20px;color:#201f1e;transform:scaleX(0.9000);">Engineering</span>
<span style="left:1359.90px;top:1228.67px;font-size:20px;color:#201f1e;transform:scaleX(0.9000);">Fixed assets</span>
<span style="left:1491.10px;top:1228.67px;font-size:20px;color:#201f1e;transform:scaleX(0.9000);">1000</span>
<span style="left:1562.10px;top:1228.67px;font-size:20px;color:#201f1e;transform:scaleX(0.9000);">Financial dimensions</span>
<span style="left:1830.80px;top:1228.67px;font-size:20px;color:#201f1e;transform:scaleX(0.9000);">Landed cost</span>
<span style="left:1981.70px;top:1228.67px;font-size:20px;color:#201f1e;transform:scaleX(0.9000);">Ship...</span>
<div style="position:absolute;left:57px;top:1235px;width:2286px;height:12px;background:#faf9f8"></div>
</body></html>
